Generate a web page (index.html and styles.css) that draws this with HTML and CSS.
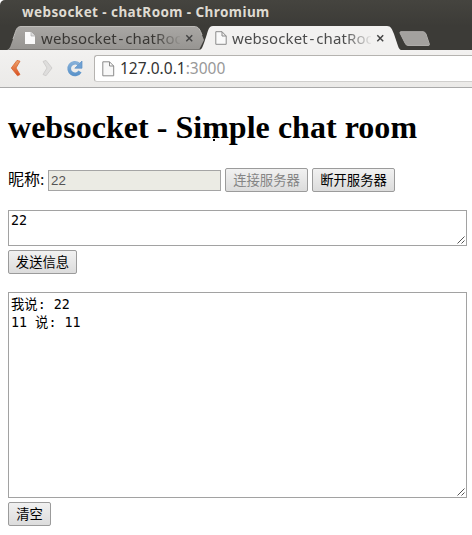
FILE: index.html
```html
<!DOCTYPE html>
<html lang="zh">
<head>
<meta charset="utf-8">
<title>websocket - chatRoom</title>
<link rel="stylesheet" href="styles.css">
</head>
<body>
<header class="chrome">
  <div class="titlebar"><span class="window-title">websocket - chatRoom - Chromium</span></div>
  <div class="tabstrip">
    <div class="tab tab-idle">
      <svg class="tab-shape" width="200" height="25" viewBox="0 0 200 25"><defs><linearGradient id="g" x2="0" y2="1"><stop offset="0" stop-color="#a9a7a4"/><stop offset="1" stop-color="#969491"/></linearGradient></defs><path d="M0 24 C3 23 4 19 6 13 C9 5 9 .5 14 .5 H187 C192 .5 193 4 195 9 L197 14 L192 24Z" fill="url(#g)"/><path d="M6 13 C9 5 9 .5 14 .5 H187 C192 .5 193 4 195 9" fill="none" stroke="#bdbbb8"/><path d="M2 23.5 H194" stroke="#777572"/></svg>
      <svg class="page-icon" width="12" height="14" viewBox="0 0 12 14"><path d="M1 1 H7 L11 5 V13 H1Z" fill="#fafafa"/><path d="M7 1 V5 H11" fill="#ddd" stroke="#aaa" stroke-width=".7"/></svg>
      <span class="tab-title">websocket - chatRoom</span>
      <svg class="close" width="9" height="9" viewBox="0 0 9 9"><path d="M1.3 1.3 L7.2 7.2 M7.2 1.3 L1.3 7.2"/></svg>
    </div>
    <div class="tab tab-active">
      <svg class="tab-shape" width="206" height="25" viewBox="0 0 206 25"><path d="M-2 25 C2 24 3 20 5 14 C8 6 8 0 13 0 H187 C191 0 192 3 194 8 L198 20 Q199 24 203 25Z" fill="#f2f1f0"/></svg>
      <svg class="page-icon" width="12" height="14" viewBox="0 0 12 14"><path d="M.8 .7 H7 L11.2 5 V13.3 H.8Z M7 .7 V5 H11.2" fill="#f9f9f9" stroke="#8a8a8a"/></svg>
      <span class="tab-title">websocket - chatRoom</span>
      <svg class="close" width="9" height="9" viewBox="0 0 9 9"><path d="M1.3 1.3 L7.2 7.2 M7.2 1.3 L1.3 7.2"/></svg>
    </div>
    <svg class="new-tab" width="32" height="16" viewBox="0 0 32 16"><path d="M2 .7 H24 Q26 .7 27 3 L30.5 13.5 Q30.5 14.5 29 14.5 H9 Q7 14.5 6 12 L1 2 Q.7 .7 2 .7Z" fill="#a3a19e" stroke="#aeaca9"/></svg>
  </div>
  <div class="toolbar">
    <svg class="nav" width="84" height="22" viewBox="0 0 84 22">
      <defs><linearGradient id="o" x2="0" y2="1"><stop offset="0" stop-color="#eda36c"/><stop offset="1" stop-color="#d94e20"/></linearGradient><linearGradient id="b" x2="0" y2="1"><stop offset="0" stop-color="#85afd8"/><stop offset="1" stop-color="#5c94ca"/></linearGradient></defs>
      <path d="M17 3.4 L20 4.2 L16 11 L20 17.5 L17.5 18.8 L11.3 11Z" fill="url(#o)" stroke="#d7622d" stroke-width=".8" stroke-linejoin="round"/>
      <path d="M46 3.4 L43 4.5 L47 11 L43 17.5 L46 18.8 L52 11Z" fill="#dedddc" stroke="#c9c8c7" stroke-width=".8" stroke-linejoin="round"/>
      <path d="M80 14.5 A5.8 5.8 0 1 1 78.6 7" fill="none" stroke="url(#b)" stroke-width="3.7"/>
      <path d="M82 4 V11.2 H74.8Z" fill="#6fa1d3" stroke="#5c90c5" stroke-width=".7"/>
    </svg>
    <div class="omnibox">
      <svg class="page-icon" width="13" height="16" viewBox="0 0 13 16"><path d="M.8 .8 H7.5 L11.7 5 V14.8 H.8Z M7.5 .8 V5 H11.7" fill="#f8f8f8" stroke="#8a8a8a"/></svg>
      <span class="url">127.0.0.1<span class="port">:3000</span></span>
    </div>
  </div>
</header>
<main class="page">
  <h1>websocket - Simple chat room<i class="speck"></i></h1>
  <div class="row">
    <label for="nick">昵称:</label>
    <input id="nick" class="nick" value="22" disabled>
    <button class="btn wide" disabled>连接服务器</button>
    <button class="btn wide">断开服务器</button>
  </div>
  <div class="area"><textarea class="message">22</textarea><svg class="grip" width="8" height="8" viewBox="0 0 8 8"><path d="M.5 7.5 L7.5 .5 M4.5 7.5 L7.5 4.5"/></svg></div>
  <button class="btn send">发送信息</button>
  <div class="area log-area"><textarea class="log">我说: 22
11 说: 11</textarea><svg class="grip" width="8" height="8" viewBox="0 0 8 8"><path d="M.5 7.5 L7.5 .5 M4.5 7.5 L7.5 4.5"/></svg></div>
  <button class="btn clear">清空</button>
</main>
</body>
</html>
```
FILE: styles.css
```css
* { box-sizing: border-box; }
body { margin: 0; width: 472px; height: 535px; overflow: hidden; background: #fff; color: #000; }
svg { display: block; flex: none; }
.chrome { height: 88px; background: linear-gradient(#45443f, #3c3b37 26px); font-family: "Noto Sans", sans-serif; border-radius: 5px 0 0 0; }
.titlebar { height: 26px; padding-left: 22px; line-height: 22px; }
.window-title { font-size: 13.5px; font-weight: 700; letter-spacing: .42px; color: #dfdbd2; white-space: nowrap; }
.tabstrip { display: flex; height: 24px; padding-left: 7px; }
.tab { position: relative; display: flex; align-items: center; height: 24px; }
.tab-idle { width: 193px; padding-left: 17px; color: #393734; }
.tab-active { width: 199px; padding-left: 15px; color: #4c4c4c; }
.tab-shape { position: absolute; left: 0; top: 0; overflow: visible; }
.tab .page-icon { position: relative; }
.tab-title { position: relative; width: 139px; margin-left: 5px; overflow: hidden; white-space: nowrap; font-size: 15px; letter-spacing: .1px; word-spacing: -2.2px; line-height: 23px; -webkit-mask-image: linear-gradient(90deg, #000 112px, transparent 141px); mask-image: linear-gradient(90deg, #000 112px, transparent 141px); }
.close { position: relative; margin-left: 5px; fill: none; stroke: #444; stroke-width: 1.5; }
.new-tab { margin: 5px 0 0; }
.toolbar { display: flex; height: 38px; padding-top: 5px; background: linear-gradient(#f2f1f0, #ebeae8); border-bottom: 1px solid #aaa; }
.nav { margin-top: 2px; }
.omnibox { display: flex; align-items: center; flex: 1; height: 27px; margin-left: 10px; padding-left: 7px; background: #fff; border: 1px solid #b5b3b0; border-bottom-color: #d0cfcd; border-right: 0; border-radius: 3px 0 0 3px; }
.url { margin: -2px 0 0 5px; font-size: 15.5px; line-height: 24px; color: #333; }
.port { color: #999; }
.page { padding: 21px 5px 0 8px; }
h1 { position: relative; margin: 0; height: 37px; font: bold 32px/37px "Liberation Serif", serif; letter-spacing: .03px; white-space: nowrap; }
.speck { position: absolute; left: 205px; top: 30px; width: 2px; height: 2px; background: #000; }
.row { display: flex; align-items: center; height: 24px; margin-top: 22px; }
label { width: 40px; font: 16px/24px "Liberation Serif", "Noto Sans CJK SC", serif; white-space: nowrap; }
.nick { width: 173px; height: 21px; margin: 0 4px 0 0; padding: 1px 2px; border: 1px solid #a5a5a5; border-radius: 0; background: #ebebe4; color: #545454; font: 13.33px "Liberation Sans", sans-serif; }
.btn { display: block; height: 24px; margin: 0; padding: 0; border: 1px solid #9b9b9b; border-radius: 2px; background: linear-gradient(#f1f1f1, #dcdcdc); color: #000; font: 13.33px/20px "Noto Sans CJK SC", sans-serif; }
.btn:disabled { color: #858585; }
.wide { width: 83px; margin-right: 4px; }
.area { position: relative; margin-top: 18px; }
textarea { display: block; width: 459px; margin: 0; padding: 2px; border: 1px solid #a2a2a2; border-radius: 0; resize: none; overflow: hidden; font: 13.33px/18px "DejaVu Sans Mono", "Noto Sans CJK SC", monospace; color: #000; background: #fff; }
.message { height: 36px; padding-top: 1px; }
.log { height: 206px; padding-top: 3px; }
.grip { position: absolute; right: 2px; bottom: 2px; fill: none; stroke: #555; stroke-width: 1; }
.send { width: 69px; margin-top: 4px; }
.clear { width: 43px; margin-top: 4px; }
```
